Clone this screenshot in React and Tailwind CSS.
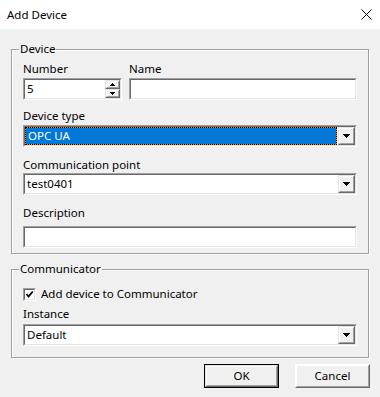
import React from "react";

function Sunken({ className = "", children }) {
  return (
    <div className={"border border-t-[#a0a0a0] border-l-[#a0a0a0] border-b-white border-r-white " + className}>
      <div className="h-full border border-t-[#696969] border-l-[#696969] border-b-[#e3e3e3] border-r-[#e3e3e3] bg-white flex items-stretch">
        {children}
      </div>
    </div>
  );
}

function Raised({ className = "", children }) {
  return (
    <div className={"border border-t-[#e3e3e3] border-l-[#e3e3e3] border-b-[#696969] border-r-[#696969] " + className}>
      <div className="h-full border border-t-white border-l-white border-b-[#a0a0a0] border-r-[#a0a0a0] bg-[#f0f0f0] flex items-center justify-center">
        {children}
      </div>
    </div>
  );
}

function DownArrow() {
  return (
    <svg width="7" height="4" viewBox="0 0 7 4" shapeRendering="crispEdges">
      <rect x="0" y="0" width="7" height="1" fill="#000" />
      <rect x="1" y="1" width="5" height="1" fill="#000" />
      <rect x="2" y="2" width="3" height="1" fill="#000" />
      <rect x="3" y="3" width="1" height="1" fill="#000" />
    </svg>
  );
}

function SmallUp() {
  return (
    <svg width="5" height="3" viewBox="0 0 5 3" shapeRendering="crispEdges">
      <rect x="2" y="0" width="1" height="1" fill="#000" />
      <rect x="1" y="1" width="3" height="1" fill="#000" />
      <rect x="0" y="2" width="5" height="1" fill="#000" />
    </svg>
  );
}

function SmallDown() {
  return (
    <svg width="5" height="3" viewBox="0 0 5 3" shapeRendering="crispEdges">
      <rect x="0" y="0" width="5" height="1" fill="#000" />
      <rect x="1" y="1" width="3" height="1" fill="#000" />
      <rect x="2" y="2" width="1" height="1" fill="#000" />
    </svg>
  );
}

function Combo({ value, selected }) {
  return (
    <Sunken className="h-[22px] w-full">
      <div className="flex-1 flex items-stretch pr-[1px]">
        {selected ? (
          <div className="flex-1 bg-[#ff8728] border border-dotted border-black flex">
            <div className="flex-1 bg-[#0078d7] text-white flex items-center pl-[2px]">{value}</div>
          </div>
        ) : (
          <div className="flex items-center pl-[2px]">{value}</div>
        )}
      </div>
      <Raised className="w-[17px]">
        <DownArrow />
      </Raised>
    </Sunken>
  );
}

function Group({ label, className = "", children }) {
  return (
    <div className={"relative border border-[#a0a0a0] shadow-[inset_1px_1px_0_#fff,1px_1px_0_#fff] " + className}>
      <span className="absolute left-[7px] top-[-9px] bg-[#f0f0f0] px-[1px] leading-[16px]">{label}</span>
      {children}
    </div>
  );
}

export default function App() {
  return (
    <div className="w-[380px] h-[397px] bg-[#f0f0f0] text-[11.5px] leading-[16px] text-black font-['Noto_Sans',sans-serif] overflow-hidden">
      <div className="h-[29px] bg-white flex items-center justify-between pl-[7px] pr-[8px]">
        <span>Add Device</span>
        <svg width="11" height="11" viewBox="0 0 11 11">
          <path d="M0.5 0.5 L10.5 10.5 M10.5 0.5 L0.5 10.5" stroke="#000" strokeWidth="1" fill="none" />
        </svg>
      </div>
      <div className="pl-[11px] pt-[20px]">
        <Group label="Device" className="w-[358px] h-[205px] px-[11px] pt-[11px] flex flex-col">
          <div className="flex gap-[7px]">
            <div className="w-[99px] flex flex-col">
              <span>Number</span>
              <Sunken className="mt-[1px] h-[22px] w-[99px]">
                <div className="flex-1 flex items-center pl-[2px]">5</div>
                <div className="w-[15px] flex flex-col">
                  <Raised className="flex-1">
                    <SmallUp />
                  </Raised>
                  <Raised className="flex-1">
                    <SmallDown />
                  </Raised>
                </div>
              </Sunken>
            </div>
            <div className="flex-1 flex flex-col">
              <span>Name</span>
              <Sunken className="mt-[1px] h-[22px] w-full">
                <div className="flex-1" />
              </Sunken>
            </div>
          </div>
          <span className="mt-[8px]">Device type</span>
          <div className="mt-[1px]">
            <Combo value="OPC UA" selected />
          </div>
          <span className="mt-[10px]">Communication point</span>
          <div>
            <Combo value="test0401" />
          </div>
          <span className="mt-[10px]">Description</span>
          <Sunken className="mt-[5px] h-[22px] w-full">
            <div className="flex-1" />
          </Sunken>
        </Group>
        <Group label="Communicator" className="mt-[15px] w-[358px] h-[89px] px-[11px] pt-[16px] flex flex-col">
          <div className="flex items-center gap-[5px] h-[16px]">
            <Sunken className="w-[13px] h-[13px]">
              <svg width="9" height="9" viewBox="0 0 9 9" className="block">
                <path d="M1.5 4 L3.5 6.5 L7.8 1.5" stroke="#000" strokeWidth="1.8" fill="none" />
              </svg>
            </Sunken>
            <span>Add device to Communicator</span>
          </div>
          <span className="mt-[4px]">Instance</span>
          <div className="mt-[2px]">
            <Combo value="Default" />
          </div>
        </Group>
        <div className="mt-[6px] flex justify-end gap-[16px] pr-[10px]">
          <div className="w-[75px] h-[24px] border border-black">
            <Raised className="h-full">
              <span>OK</span>
            </Raised>
          </div>
          <Raised className="w-[75px] h-[24px] border-t-white border-l-white">
            <span>Cancel</span>
          </Raised>
        </div>
      </div>
    </div>
  );
}
